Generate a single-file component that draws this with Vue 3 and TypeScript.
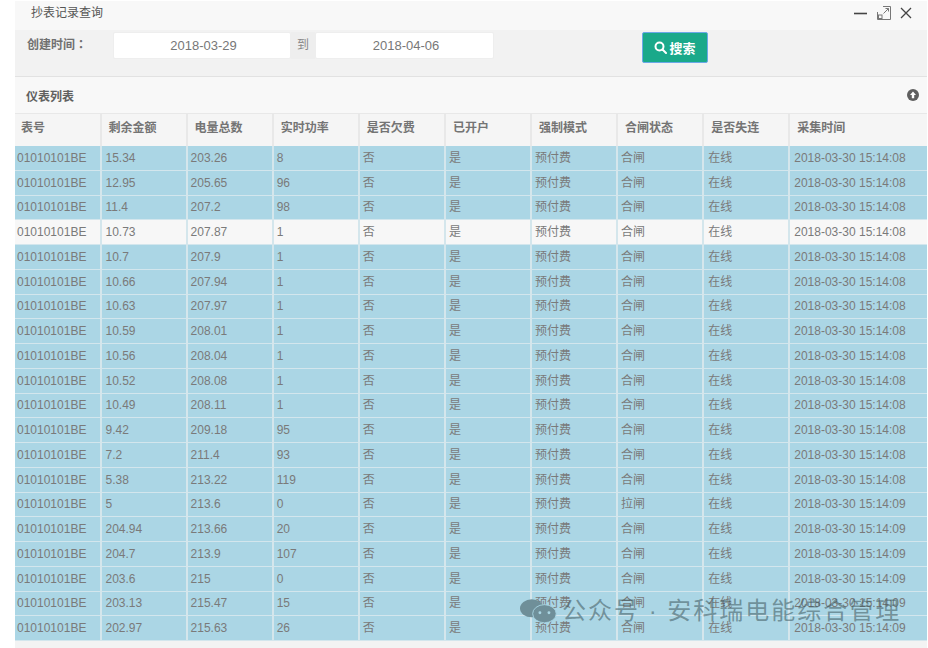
<script setup lang="ts">
interface Row { a: string; b: string; c: string; s?: string; t: string; plain?: boolean }
const heads = ['表号','剩余金额','电量总数','实时功率','是否欠费','已开户','强制模式','合闸状态','是否失连','采集时间']
const t8 = '2018-03-30 15:14:08'
const t9 = '2018-03-30 15:14:09'
const rows: Row[] = [
  {a:'15.34',b:'203.26',c:'8',t:t8},
  {a:'12.95',b:'205.65',c:'96',t:t8},
  {a:'11.4',b:'207.2',c:'98',t:t8},
  {a:'10.73',b:'207.87',c:'1',t:t8,plain:true},
  {a:'10.7',b:'207.9',c:'1',t:t8},
  {a:'10.66',b:'207.94',c:'1',t:t8},
  {a:'10.63',b:'207.97',c:'1',t:t8},
  {a:'10.59',b:'208.01',c:'1',t:t8},
  {a:'10.56',b:'208.04',c:'1',t:t8},
  {a:'10.52',b:'208.08',c:'1',t:t8},
  {a:'10.49',b:'208.11',c:'1',t:t8},
  {a:'9.42',b:'209.18',c:'95',t:t8},
  {a:'7.2',b:'211.4',c:'93',t:t8},
  {a:'5.38',b:'213.22',c:'119',t:t8},
  {a:'5',b:'213.6',c:'0',s:'拉闸',t:t9},
  {a:'204.94',b:'213.66',c:'20',t:t9},
  {a:'204.7',b:'213.9',c:'107',t:t9},
  {a:'203.6',b:'215',c:'0',t:t9},
  {a:'203.13',b:'215.47',c:'15',t:t9},
  {a:'202.97',b:'215.63',c:'26',t:t9},
]
</script>

<template>
  <div class="page">
    <div class="panel">
      <div class="titlebar">
        <span class="title">抄表记录查询</span>
        <div class="winbtns">
          <svg width="14" height="14" viewBox="0 0 14 14"><path d="M0 7.5h13" stroke="#444" stroke-width="1.6"/></svg>
          <svg width="14" height="14" viewBox="0 0 14 14" fill="none" stroke="#777" stroke-width="1"><path d="M6 .5h7.5v13H.5V6"/><rect x="1.5" y="9" width="3.5" height="3.5"/><path d="M6.5 7.5l5-5M8.5 2.5h3v3"/></svg>
          <svg width="12" height="12" viewBox="0 0 12 12"><path d="M1 1l10 10M11 1L1 11" stroke="#444" stroke-width="1.3"/></svg>
        </div>
      </div>
      <div class="filter">
        <label class="flabel">创建时间<span class="colon">：</span></label>
        <div class="range">
          <div class="dinput">2018-03-29</div>
          <div class="to">到</div>
          <div class="dinput second">2018-04-06</div>
        </div>
        <button class="search" type="button">
          <svg width="13" height="13" viewBox="0 0 13 13" fill="none" stroke="#fff" stroke-width="2"><circle cx="5.5" cy="5.5" r="4"/><path d="M8.5 8.5l3.5 3.5" stroke-linecap="round"/></svg>
          <span>搜索</span>
        </button>
      </div>
      <div class="listhead">
        <span>仪表列表</span>
        <svg width="12" height="12" viewBox="0 0 12 12"><circle cx="6" cy="6" r="6" fill="#5f5f5f"/><path d="M6 2.5L9 6H7.2v3.2H4.8V6H3z" fill="#fff"/></svg>
      </div>
      <table class="grid">
        <colgroup>
          <col class="c0" />
          <col v-for="n in 8" :key="n" class="cn" />
          <col />
        </colgroup>
        <thead>
          <tr><th v-for="h in heads" :key="h">{{ h }}</th></tr>
        </thead>
        <tbody>
          <tr v-for="(r, i) in rows" :key="i" :class="{ plain: r.plain }">
            <td class="first">01010101BE</td>
            <td class="near">{{ r.a }}</td>
            <td>{{ r.b }}</td>
            <td>{{ r.c }}</td>
            <td>否</td>
            <td>是</td>
            <td>预付费</td>
            <td>{{ r.s ?? '合闸' }}</td>
            <td class="near">在线</td>
            <td class="near">{{ r.t }}</td>
          </tr>
        </tbody>
      </table>
    </div>
    <div class="watermark">
      <svg width="38" height="26" viewBox="0 0 42 26">
        <ellipse cx="13" cy="10" rx="13" ry="10" fill="#6f8f99"/>
        <ellipse cx="27" cy="16" rx="13" ry="10" fill="#6f8f99" stroke="#a9d5e3" stroke-width="1"/>
        <circle cx="22" cy="15" r="1.6" fill="#a9d5e3"/><circle cx="32" cy="15" r="1.6" fill="#a9d5e3"/>
      </svg>
      <span>公众号 · 安科瑞电能综合管理</span>
    </div>
  </div>
</template>

<style>
html, body { margin: 0; background: #fff; overflow: hidden; }
</style>

<style scoped>
.page {
  position: relative;
  width: 928px;
  height: 648px;
  overflow: hidden;
  background: #fff;
  padding: 1px 1px 0 15px;
  box-sizing: border-box;
  font-family: "Liberation Sans", "Noto Sans CJK SC", sans-serif;
  font-size: 12px;
  color: #777;
}
.panel { background: #f3f3f3; height: 647px; }
.titlebar {
  height: 29px;
  background: #f8f8f8;
  display: flex;
  align-items: center;
  justify-content: space-between;
  padding: 0 14px 5px 16px;
  box-sizing: border-box;
  color: #555;
}
.title { margin-bottom: 4px; }
.winbtns { display: flex; align-items: center; gap: 9px; margin-right: 1px; }
.filter {
  height: 46px;
  background: #f2f2f2;
  border-bottom: 1px solid #e2e2e2;
  box-sizing: content-box;
  display: flex;
  align-items: flex-start;
  position: relative;
}
.flabel { margin: 6px 0 0 12px; width: 86px; font-weight: 700; color: #707070; line-height: 16px; }
.colon { font-family: "Noto Sans CJK TC", sans-serif; }
.range { display: flex; margin-top: 2px; height: 27px; }
.dinput {
  width: 178px;
  padding-left: 3px;
  background: #fff;
  border: 1px solid #eee;
  border-radius: 2px;
  box-sizing: border-box;
  text-align: center;
  font-size: 13px;
  line-height: 25px;
  color: #777;
}
.dinput.second { width: 179px; }
.to { width: 24px; background: #eee; text-align: center; line-height: 27px; color: #888; }
.search {
  margin: 2px 0 0 148px;
  width: 66px;
  height: 31px;
  padding: 0;
  background: #1aa98a;
  border: 1px solid #6aa8e8;
  border-radius: 2px;
  color: #fff;
  font: 700 13px "Liberation Sans", "Noto Sans CJK SC", sans-serif;
  display: flex;
  align-items: center;
  justify-content: center;
  gap: 2px;
}
.listhead {
  height: 36px;
  background: #f8f8f8;
  display: flex;
  align-items: center;
  justify-content: space-between;
  padding: 0 8px 0 11px;
  color: #606060;
  font-weight: 700;
}
.grid {
  width: 912px;
  table-layout: fixed;
  border-collapse: collapse;
}
.c0 { width: 85.5px; }
.cn { width: 86.1px; }
.grid th {
  height: 32px;
  padding: 0 0 3px 7px;
  box-sizing: border-box;
  line-height: 16px;
  background: #f5f5f5;
  border-top: 1px solid #e8e8e8;
  border-left: 2px solid #e8e8e8;
  text-align: left;
  font-weight: 700;
  color: #747474;
}
.grid th:first-child { border-left: 0; padding-left: 6px; }
.grid td {
  height: 24.75px;
  padding: 0 0 0 3px;
  box-sizing: border-box;
  line-height: 16px;
  background: #abd6e5;
  border-left: 2px solid #d4e6ec;
  border-bottom: 1px solid #d3e6ed;
  color: #7a7a7a;
  white-space: nowrap;
  overflow: hidden;
}
.grid td.first { border-left: 0; padding-left: 2px; }
.grid td.near { padding-left: 4px; }
.grid tr.plain td { background: #f7f7f7; }
.watermark {
  position: absolute;
  left: 520px;
  top: 597px;
  display: flex;
  align-items: center;
  gap: 4px;
  font-size: 24px;
  letter-spacing: 2px;
  color: rgba(60, 85, 90, 0.55);
  white-space: nowrap;
  line-height: 28px;
}
</style>
